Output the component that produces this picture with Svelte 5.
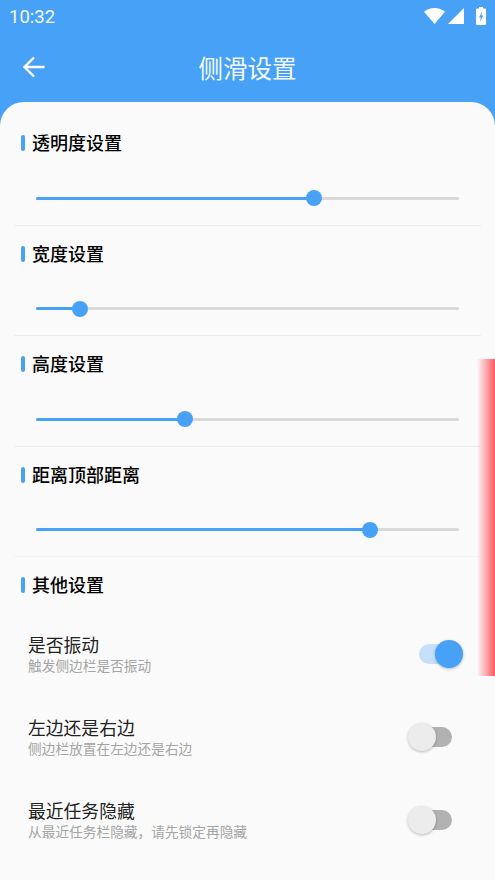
<script>
  // slider positions are fractions of the track width
  const sliders = [
    { title: '透明度设置', value: 0.657 },
    { title: '宽度设置', value: 0.104 },
    { title: '高度设置', value: 0.352 },
    { title: '距离顶部距离', value: 0.79 }
  ];

  const options = [
    { title: '是否振动', desc: '触发侧边栏是否振动', on: true },
    { title: '左边还是右边', desc: '侧边栏放置在左边还是右边', on: false },
    { title: '最近任务隐藏', desc: '从最近任务栏隐藏，请先锁定再隐藏', on: false }
  ];
</script>

<div class="screen">
  <header class="top">
    <div class="status">
      <span class="time">10:32</span>
      <div class="status-icons">
        <svg class="wifi" width="21" height="16" viewBox="0 0 21 16"><path d="M0 3.800C2.800 1.400 6.400 0 10.500 0S18.200 1.400 21 3.800L10.500 16z" fill="#fff"/></svg>
        <svg class="signal" width="16" height="16" viewBox="0 0 16 16"><path d="M16 0V16H0z" fill="#fff"/></svg>
        <svg width="10" height="18" viewBox="0 0 10 18"><path d="M3 0h4v1.500H9a1 1 0 0 1 1 1V17a1 1 0 0 1-1 1H1a1 1 0 0 1-1-1V2.500a1 1 0 0 1 1-1h2z" fill="#fff"/><path d="M6 4.500L3 10.500H4.800L4 15 7.200 8.500H5.400z" fill="#47a1f6"/></svg>
      </div>
    </div>
    <div class="bar">
      <svg class="back" width="24" height="24" viewBox="0 0 24 24"><path d="M22.500 12H2.500M12 2.500L2.500 12 12 21.500" fill="none" stroke="#fff" stroke-width="2.400"/></svg>
      <h1>侧滑设置</h1>
    </div>
  </header>

  <main class="sheet">
    {#each sliders as s, i}
      <section class="slider-block" class:last={i === sliders.length - 1}>
        <h2>{s.title}</h2>
        <div class="track">
          <div class="fill" style="width: {s.value * 100}%"></div>
          <div class="thumb" style="left: {s.value * 100}%"></div>
        </div>
      </section>
    {/each}

    <section class="others">
      <h2>其他设置</h2>
      {#each options as o}
        <div class="row">
          <div class="row-text">
            <div class="row-title">{o.title}</div>
            <div class="row-desc">{o.desc}</div>
          </div>
          <div class="switch" class:on={o.on}><span class="knob"></span></div>
        </div>
      {/each}
    </section>
  </main>

  <div class="edge"></div>
</div>

<style>
  :global(body) {
    margin: 0;
    background: #47a1f6;
  }

  .screen {
    position: relative;
    width: 495px;
    height: 880px;
    overflow: hidden;
    background: #47a1f6;
    font-family: Roboto, "Noto Sans CJK SC", sans-serif;
  }

  .top {
    height: 102px;
    color: #fff;
  }

  .status {
    height: 34px;
    display: flex;
    align-items: center;
    justify-content: space-between;
    padding: 0 9px;
  }

  .time {
    font-size: 18.500px;
    color: #f2f8fe;
  }

  .status-icons {
    display: flex;
    align-items: center;
    margin-top: -2px;
  }

  .signal {
    margin: 0 12px 0 3px;
  }

  .bar {
    position: relative;
    height: 66px;
    display: flex;
    align-items: center;
    justify-content: center;
  }

  .back {
    position: absolute;
    left: 22px;
    top: 21px;
  }

  h1 {
    margin: 0;
    font-size: 24.500px;
    font-weight: 400;
    color: #f4f9fe;
  }

  .sheet {
    height: 778px;
    box-sizing: border-box;
    padding: 13px 14px 0;
    background: #fafafa;
    border-radius: 24px 24px 0 0;
  }

  h2 {
    margin: 0 0 0 7px;
    height: 22px;
    line-height: 23px;
    padding-left: 11px;
    position: relative;
    font-size: 18px;
    font-weight: 500;
    color: #000;
  }

  h2::before {
    content: '';
    position: absolute;
    left: 0;
    top: 3px;
    width: 4px;
    height: 16px;
    border-radius: 2px;
    background: #47a1f6;
  }

  .slider-block {
    height: 110.500px;
    box-sizing: border-box;
    padding-top: 17px;
    border-bottom: 1px solid #ededed;
  }

  .slider-block.last {
    border-bottom-color: #f3f3f3;
  }

  .track {
    position: relative;
    height: 3px;
    margin: 42.500px 22px 0;
    background: #d9d9d9;
    border-radius: 2px;
  }

  .fill {
    height: 100%;
    background: #47a1f6;
    border-radius: 2px;
  }

  .thumb {
    position: absolute;
    top: 50%;
    width: 16px;
    height: 16px;
    margin: -8px 0 0 -8px;
    border-radius: 50%;
    background: #47a1f6;
  }

  .others {
    display: flex;
    flex-direction: column;
    padding-top: 17px;
  }

  .row {
    height: 83px;
    display: flex;
    align-items: center;
    justify-content: space-between;
    padding: 0 15px 0 14px;
  }

  .others h2 + .row {
    margin-top: 18px;
  }

  .row-title {
    font-size: 17.800px;
    line-height: 22px;
    color: #222;
  }

  .row-desc {
    font-size: 13.700px;
    line-height: 19px;
    color: #a5a5a5;
  }

  .switch {
    position: relative;
    width: 34px;
    height: 20px;
    margin: 0 14px 4px 0;
    border-radius: 10px;
    background: #b2b2b2;
  }

  .switch.on {
    margin-right: 4px;
    width: 43px;
    background: #c6dffa;
  }

  .knob {
    position: absolute;
    top: -4px;
    left: -10px;
    width: 28px;
    height: 28px;
    border-radius: 50%;
    background: #ececec;
    box-shadow: 0 1px 3px rgba(0, 0, 0, 0.25);
  }

  .switch.on .knob {
    left: auto;
    right: -1px;
    background: #47a1f6;
  }

  .edge {
    position: absolute;
    top: 359px;
    right: 0;
    width: 18px;
    height: 317px;
    background: linear-gradient(to right, rgba(255, 60, 70, 0), rgba(255, 60, 70, 0.85));
  }
</style>
